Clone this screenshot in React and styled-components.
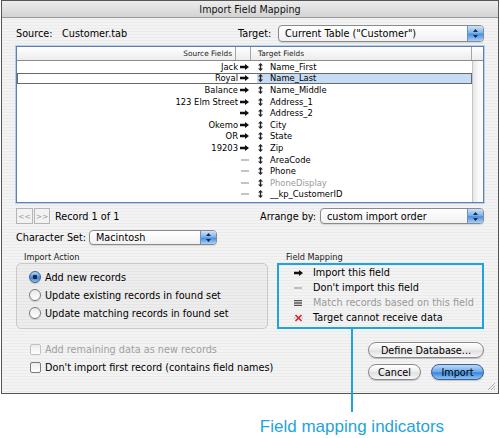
import React from "react";
import styled, { createGlobalStyle } from "styled-components";

const BLUE = "#1fa3dc";

const GlobalStyle = createGlobalStyle`
  html, body {
    margin: 0;
    padding: 0;
    background: #fff;
  }
  body {
    font-family: "DejaVu Sans", "Liberation Sans", sans-serif;
    color: #000;
  }
`;

const Page = styled.div`
  width: 500px;
  height: 438px;
  overflow: hidden;
`;

const Window = styled.div`
  box-sizing: border-box;
  margin-left: 1px;
  width: 498px;
  height: 394px;
  border: 1px solid #555;
  background: repeating-linear-gradient(
    to bottom,
    #ebebeb 0 1px,
    #f3f3f3 1px 3px
  );
  display: flex;
  flex-direction: column;
  position: relative;
`;

const TitleBar = styled.div`
  height: 16px;
  border-bottom: 1px solid #999;
  background: linear-gradient(#ececec, #d3d3d3);
  display: flex;
  align-items: center;
  justify-content: center;
  font-size: 9.6px;
  color: #111;
`;

const Content = styled.div`
  padding: 0 14px;
  display: flex;
  flex-direction: column;
  font-size: 9.7px;
`;

const Row = styled.div`
  display: flex;
  align-items: center;
  height: ${(p) => p.$h}px;
  margin-top: ${(p) => p.$mt}px;
`;

const Spacer = styled.div`
  flex: 1;
`;

const FieldLabel = styled.span`
  width: ${(p) => p.$w}px;
  flex: none;
  white-space: nowrap;
`;

const PopupBox = styled.div`
  box-sizing: border-box;
  width: ${(p) => p.$w}px;
  height: ${(p) => p.$h}px;
  border: 1px solid #8a8a8a;
  border-radius: 4px;
  background: linear-gradient(#ffffff, #f1f1f1);
  display: flex;
  align-items: center;
  overflow: hidden;
  box-shadow: 0 1px 1px rgba(0, 0, 0, 0.12);
`;

const PopupText = styled.span`
  flex: 1;
  padding-left: 6px;
  white-space: nowrap;
  font-size: 9.7px;
`;

const PopupArrows = styled.span`
  width: 15px;
  height: 100%;
  border-left: 1px solid #6a8fc2;
  background: linear-gradient(#cfe3f8, #7fb3ec 45%, #4b90e0 55%, #a9d0f6);
  display: flex;
  align-items: center;
  justify-content: center;
`;

function Popup({ w, h = 16, children }) {
  return (
    <PopupBox $w={w} $h={h}>
      <PopupText>{children}</PopupText>
      <PopupArrows>
        <svg width="5" height="9" viewBox="0 0 5 9">
          <path d="M2.5 0L5 3H0z M2.5 9L0 6h5z" fill="#1b2a45" />
        </svg>
      </PopupArrows>
    </PopupBox>
  );
}

/* ---------- mapping list ---------- */

const Table = styled.div`
  margin-top: 4px;
  height: 157px;
  box-sizing: border-box;
  border: 1px solid #5f80ad;
  box-shadow: 0 0 0 1px #b7cde8;
  background: #fff;
  display: flex;
  flex-direction: column;
`;

const Header = styled.div`
  display: flex;
  height: 13px;
  border-bottom: 1px solid #8c8c8c;
  background: linear-gradient(#ffffff, #ececec);
  font-size: 7.4px;
  color: #222;
`;

const HeadCell = styled.div`
  box-sizing: border-box;
  width: ${(p) => (p.$w ? `${p.$w}px` : "auto")};
  flex: ${(p) => (p.$w ? "none" : 1)};
  border-right: 1px solid #a5a5a5;
  display: flex;
  align-items: center;
  justify-content: ${(p) => (p.$right ? "flex-end" : "flex-start")};
  padding: 0 ${(p) => (p.$right ? 3 : 0)}px 0 ${(p) => (p.$right ? 0 : 7)}px;
  &:last-child {
    border-right: none;
  }
`;

const Body = styled.div`
  flex: 1;
  display: flex;
`;

const Rows = styled.div`
  flex: 1;
`;

const ScrollTrack = styled.div`
  width: 10px;
  border-left: 1px solid #c4c4c4;
  background: linear-gradient(to right, #e6e6e6, #fbfbfb 60%);
`;

const MapRow = styled.div`
  display: grid;
  grid-template-columns: 221px 13px 18px 1fr;
  align-items: center;
  height: 11.6px;
  font-size: 8.4px;
  box-sizing: border-box;
  ${(p) =>
    p.$selected &&
    `
    box-shadow: inset 0 0 0 1px #6a6a6a;
    background: linear-gradient(to right, transparent 240px, #c6dbf4 240px);
  `}
`;

const SourceCell = styled.span`
  text-align: right;
  white-space: nowrap;
`;

const IconCell = styled.span`
  display: flex;
  align-items: center;
  justify-content: center;
`;

const TargetCell = styled.span`
  padding-left: 1px;
  white-space: nowrap;
  color: ${(p) => (p.$dim ? "#9a9a9a" : "#000")};
`;

const MapArrow = ({ color = "#111" }) => (
  <svg width="9" height="6" viewBox="0 0 9 6">
    <path d="M0 1.7h5V0l4 3-4 3V4.3H0z" fill={color} />
  </svg>
);

const Dash = () => (
  <svg width="8" height="2" viewBox="0 0 8 2">
    <rect x="0" y="0.5" width="8" height="1" fill="#8a8a8a" />
  </svg>
);

const Mover = () => (
  <svg width="5" height="8" viewBox="0 0 5 8">
    <path d="M2.5 0L5 2.4H0z M1.8 2h1.4v4H1.8z M2.5 8L0 5.6h5z" fill="#222" />
  </svg>
);

const mappings = [
  { src: "Jack", dst: "Name_First", on: true },
  { src: "Royal", dst: "Name_Last", on: true, selected: true },
  { src: "Balance", dst: "Name_Middle", on: true },
  { src: "123 Elm Street", dst: "Address_1", on: true },
  { src: "", dst: "Address_2", on: true },
  { src: "Okemo", dst: "City", on: true },
  { src: "OR", dst: "State", on: true },
  { src: "19203", dst: "Zip", on: true },
  { src: "", dst: "AreaCode" },
  { src: "", dst: "Phone" },
  { src: "", dst: "PhoneDisplay", dim: true },
  { src: "", dst: "__kp_CustomerID" },
];

/* ---------- lower controls ---------- */

const NavButton = styled.div`
  box-sizing: border-box;
  width: ${(p) => p.$w}px;
  height: 16px;
  border: 1px solid #b5b5b5;
  background: #f2f2f2;
  color: #9d9d9d;
  font-size: 7.5px;
  display: flex;
  align-items: center;
  justify-content: center;
  margin-right: ${(p) => p.$mr}px;
`;

const Groups = styled.div`
  margin-top: 6px;
  display: flex;
  gap: 9px;
`;

const GroupColumn = styled.div`
  width: ${(p) => (p.$w ? `${p.$w}px` : "auto")};
  flex: ${(p) => (p.$w ? "none" : 1)};
  display: flex;
  flex-direction: column;
`;

const GroupLabel = styled.div`
  height: 12px;
  font-size: 8.2px;
  color: #222;
  padding-left: ${(p) => p.$pl}px;
  display: flex;
  align-items: center;
`;

const GroupBox = styled.div`
  box-sizing: border-box;
  height: 66px;
  border: 1px solid #c9c9c9;
  border-radius: 5px;
  background: rgba(0, 0, 0, 0.025);
  padding: 4px 0 0 12px;
`;

const OptionRow = styled.div`
  display: flex;
  align-items: center;
  gap: 4px;
  height: ${(p) => p.$h || 18}px;
  color: ${(p) => (p.$disabled ? "#a0a0a0" : "#000")};
  white-space: nowrap;
`;

const Radio = styled.span`
  box-sizing: border-box;
  width: 12px;
  height: 12px;
  border-radius: 50%;
  border: 1px solid ${(p) => (p.$on ? "#41618f" : "#7b7b7b")};
  background: ${(p) =>
    p.$on
      ? "radial-gradient(circle, #162747 0 2px, transparent 2.6px), linear-gradient(#b9d8f6, #3f86d8 60%, #8cc2f2)"
      : "linear-gradient(#e9e9e9, #ffffff)"};
  box-shadow: 0 1px 1px rgba(0, 0, 0, 0.15);
`;

const Checkbox = styled.span`
  box-sizing: border-box;
  width: 11px;
  height: 11px;
  border-radius: 2px;
  border: 1px solid ${(p) => (p.$disabled ? "#c2c2c2" : "#7b7b7b")};
  background: linear-gradient(#ececec, #ffffff);
`;

const Legend = styled.div`
  box-sizing: border-box;
  height: 66px;
  border: 2px solid ${BLUE};
  padding-left: 14px;
  position: relative;

  &::after {
    content: "";
    position: absolute;
    left: 72px;
    top: 100%;
    width: 2px;
    height: 85px;
    background: ${BLUE};
  }
`;

const LegendRow = styled.div`
  display: flex;
  align-items: center;
  height: 15px;
  color: ${(p) => (p.$dim ? "#9a9a9a" : "#000")};
  white-space: nowrap;
`;

const LegendIcon = styled.span`
  width: 10px;
  display: flex;
  justify-content: center;
  margin-right: 10px;
`;

const Bottom = styled.div`
  margin-top: 13px;
  display: flex;
`;

const CheckColumn = styled.div`
  flex: 1;
  display: flex;
  flex-direction: column;
  gap: 4px;
  padding-left: 14px;
`;

const ButtonColumn = styled.div`
  width: 116px;
  display: flex;
  flex-direction: column;
  gap: 6px;
`;

const ButtonRow = styled.div`
  display: flex;
  justify-content: space-between;
`;

const Button = styled.div`
  box-sizing: border-box;
  width: ${(p) => p.$w}px;
  height: 16px;
  border-radius: 8px;
  border: 1px solid ${(p) => (p.$primary ? "#3f5f95" : "#8a8a8a")};
  background: ${(p) =>
    p.$primary
      ? "linear-gradient(#bcdaf7, #6aa6e8 50%, #3a84dc 55%, #8ec4f4)"
      : "linear-gradient(#ffffff, #ececec 50%, #e0e0e0 55%, #f7f7f7)"};
  box-shadow: 0 1px 1px rgba(0, 0, 0, 0.2);
  display: flex;
  align-items: center;
  justify-content: center;
  font-size: 9.7px;
  white-space: nowrap;
`;

const Grip = styled.svg`
  position: absolute;
  right: 2px;
  bottom: 2px;
`;

const Caption = styled.div`
  width: 200px;
  margin: 23px 0 0 252px;
  text-align: center;
  font-family: "Liberation Sans", Arial, sans-serif;
  font-size: 17px;
  line-height: 20px;
  color: ${BLUE};
  white-space: nowrap;
`;

export default function App() {
  return (
    <Page>
      <GlobalStyle />
      <Window>
        <TitleBar>Import Field Mapping</TitleBar>
        <Content>
          <Row $h={17} $mt={7}>
            <FieldLabel $w={46}>Source:</FieldLabel>
            <span>Customer.tab</span>
            <Spacer />
            <FieldLabel $w={40}>Target:</FieldLabel>
            <Popup w={206} h={17}>
              Current Table ("Customer")
            </Popup>
          </Row>

          <Table>
            <Header>
              <HeadCell $w={219} $right>
                Source Fields
              </HeadCell>
              <HeadCell $w={15} />
              <HeadCell>Target Fields</HeadCell>
              <HeadCell $w={11} />
            </Header>
            <Body>
              <Rows>
                {mappings.map((m) => (
                  <MapRow key={m.dst} $selected={m.selected}>
                    <SourceCell>{m.src}</SourceCell>
                    <IconCell>{m.on ? <MapArrow /> : <Dash />}</IconCell>
                    <IconCell>
                      <Mover />
                    </IconCell>
                    <TargetCell $dim={m.dim}>{m.dst}</TargetCell>
                  </MapRow>
                ))}
              </Rows>
              <ScrollTrack />
            </Body>
          </Table>

          <Row $h={16} $mt={5}>
            <NavButton $w={17} $mr={1}>
              &lt;&lt;
            </NavButton>
            <NavButton $w={16} $mr={5}>
              &gt;&gt;
            </NavButton>
            <span>Record 1 of 1</span>
            <Spacer />
            <FieldLabel $w={60}>Arrange by:</FieldLabel>
            <Popup w={164}>custom import order</Popup>
          </Row>

          <Row $h={15} $mt={6}>
            <FieldLabel $w={73}>Character Set:</FieldLabel>
            <Popup w={128} h={15}>
              Macintosh
            </Popup>
          </Row>

          <Groups>
            <GroupColumn $w={252}>
              <GroupLabel $pl={8}>Import Action</GroupLabel>
              <GroupBox>
                <OptionRow>
                  <Radio $on />
                  Add new records
                </OptionRow>
                <OptionRow>
                  <Radio />
                  Update existing records in found set
                </OptionRow>
                <OptionRow>
                  <Radio />
                  Update matching records in found set
                </OptionRow>
              </GroupBox>
            </GroupColumn>
            <GroupColumn>
              <GroupLabel $pl={9}>Field Mapping</GroupLabel>
              <Legend>
                <LegendRow>
                  <LegendIcon>
                    <MapArrow />
                  </LegendIcon>
                  Import this field
                </LegendRow>
                <LegendRow>
                  <LegendIcon>
                    <Dash />
                  </LegendIcon>
                  Don't import this field
                </LegendRow>
                <LegendRow $dim>
                  <LegendIcon>
                    <svg width="8" height="6" viewBox="0 0 8 6">
                      <path d="M0 0h8v1.3H0z M0 2.35h8v1.3H0z M0 4.7h8V6H0z" fill="#555" />
                    </svg>
                  </LegendIcon>
                  Match records based on this field
                </LegendRow>
                <LegendRow>
                  <LegendIcon>
                    <svg width="9" height="8" viewBox="0 0 9 8">
                      <path d="M1.5 1l6 6M7.5 1l-6 6" stroke="#d6202a" strokeWidth="1.6" />
                      <path d="M0 4h1.2M7.8 4H9" stroke="#888" strokeWidth="0.8" />
                    </svg>
                  </LegendIcon>
                  Target cannot receive data
                </LegendRow>
              </Legend>
            </GroupColumn>
          </Groups>

          <Bottom>
            <CheckColumn>
              <OptionRow $h={14} $disabled>
                <Checkbox $disabled />
                Add remaining data as new records
              </OptionRow>
              <OptionRow $h={14}>
                <Checkbox />
                Don't import first record (contains field names)
              </OptionRow>
            </CheckColumn>
            <ButtonColumn>
              <Button $w={116}>Define Database...</Button>
              <ButtonRow>
                <Button $w={53}>Cancel</Button>
                <Button $w={53} $primary>
                  Import
                </Button>
              </ButtonRow>
            </ButtonColumn>
          </Bottom>
        </Content>
        <Grip width="9" height="9" viewBox="0 0 9 9">
          <path d="M8 1L1 8M8 4L4 8M8 7L7 8" stroke="#9a9a9a" strokeWidth="0.8" />
        </Grip>
      </Window>
      <Caption>Field mapping indicators</Caption>
    </Page>
  );
}
